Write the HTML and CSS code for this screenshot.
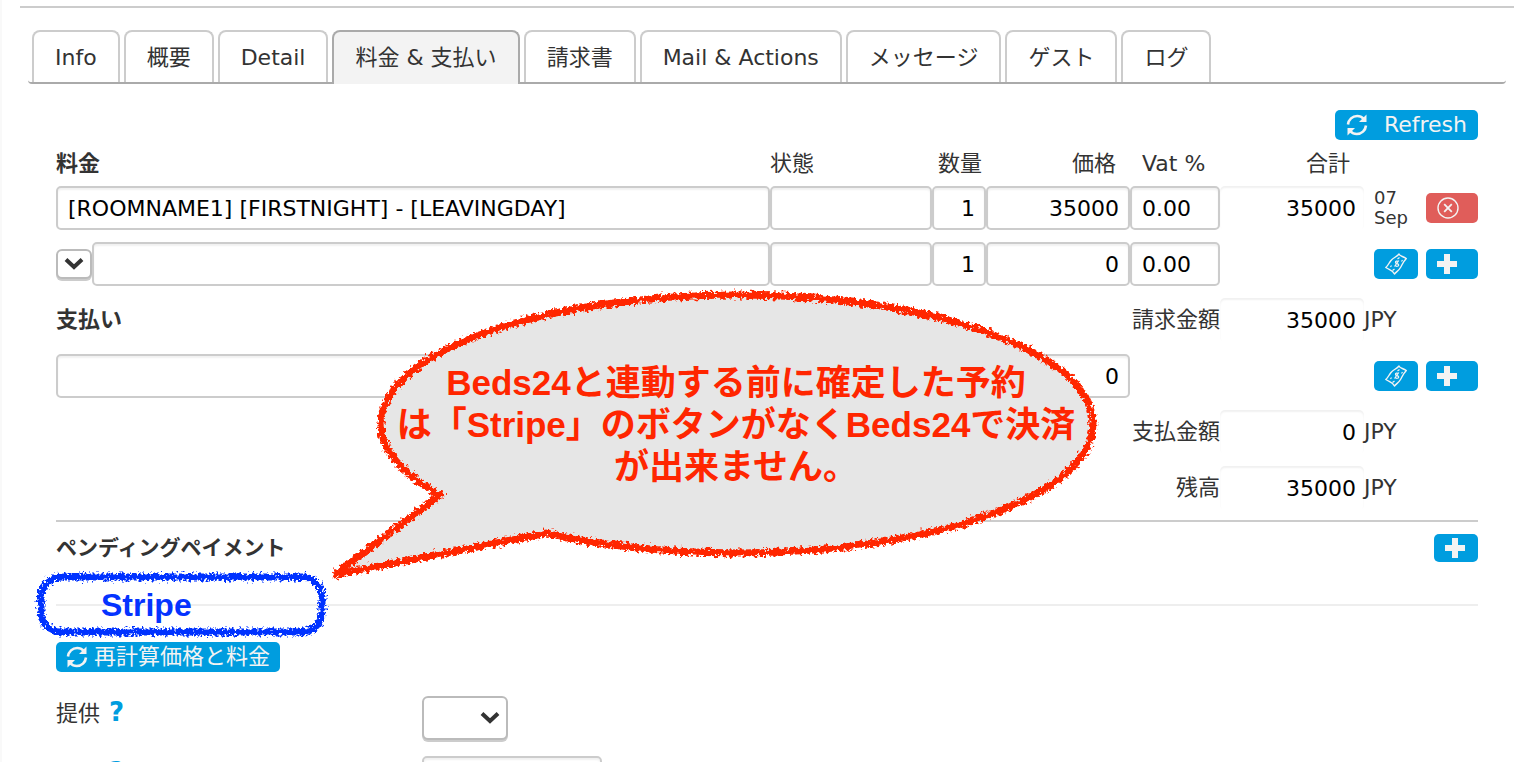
FILE: index.html
```
<!DOCTYPE html>
<html lang="ja">
<head>
    <meta charset="UTF-8">
    <meta name="viewport" content="width=device-width, initial-scale=1.0">
    <title>料金 &amp; 支払い</title>
    <link rel="stylesheet" href="styles.css">
</head>
<body>
    <!-- shared icons -->
    <svg class="icon-defs" width="0" height="0">
        <symbol id="icon-refresh" viewBox="0 0 22 22">
            <path d="M2 10.5C2.5 5.500 6.500 2 11.200 2c2.600 0 4.800 1 6.300 2.600" fill="none" stroke="currentColor" stroke-width="2.600"/>
            <path d="M20.500 0.500v7.500h-7.500z" fill="currentColor"/>
            <path d="M20 11.500C19.500 16.500 15.500 20 10.800 20c-2.600 0-4.800-1-6.300-2.600" fill="none" stroke="currentColor" stroke-width="2.600"/>
            <path d="M1.500 21.500v-7.500h7.500z" fill="currentColor"/>
        </symbol>
        <symbol id="icon-plus" viewBox="0 0 20 20">
            <path d="M7 0h6v7h7v6h-7v7H7v-7H0V7h7z" fill="currentColor"/>
        </symbol>
        <symbol id="icon-money" viewBox="0 0 22 22">
            <path d="M14 1c1 2.500 3.500 2 7.300 4.500C18 9 17.500 11 15.500 14.500c-2 3.500-4 4-6 6.500C7.500 17 5.500 17.500 0.800 14.500 3.500 12 3.500 10.500 6 7.500 8.500 4.500 11.500 4 14 1z" fill="none" stroke="currentColor" stroke-width="1.400" stroke-linejoin="round"/>
            <path d="M13.500 8.800c-1.200-1.300-3.300-.6-3 .7.300 1.400 3.100 1 3.200 2.500.1 1.300-2.400 1.900-3.700.4M13.800 7.500l-4.300 6M17.500 7l-1 1.500M5.500 14l1-1.500M14.500 4.500L12.500 6M7.500 17.500l2-1.500" fill="none" stroke="currentColor" stroke-width="1.200"/>
        </symbol>
        <symbol id="icon-delete" viewBox="0 0 22 22">
            <circle cx="11" cy="11" r="10" fill="none" stroke="currentColor" stroke-width="1.400"/>
            <path d="M7.200 7.200l7.600 7.600M14.800 7.200l-7.600 7.600" fill="none" stroke="currentColor" stroke-width="1.800"/>
        </symbol>
    </svg>

    <div class="page">
        <nav class="tabs">
            <a href="#info">Info</a>
            <a href="#summary">概要</a>
            <a href="#detail">Detail</a>
            <a href="#charges" class="active">料金 &amp; 支払い</a>
            <a href="#invoice">請求書</a>
            <a href="#mail">Mail &amp; Actions</a>
            <a href="#messages">メッセージ</a>
            <a href="#guests">ゲスト</a>
            <a href="#log">ログ</a>
        </nav>

        <main class="content">
            <div class="toolbar">
                <button class="btn btn-refresh"><svg class="icon"><use href="#icon-refresh"/></svg>Refresh</button>
            </div>

            <table class="charges">
                <colgroup>
                    <col>
                    <col class="col-status">
                    <col class="col-qty">
                    <col class="col-price">
                    <col class="col-vat">
                    <col class="col-total">
                    <col class="col-actions">
                </colgroup>
                <thead>
                    <tr>
                        <th class="title">料金</th>
                        <th>状態</th>
                        <th class="num qty-head">数量</th>
                        <th class="num">価格</th>
                        <th class="vat-head">Vat %</th>
                        <th class="num">合計</th>
                        <th></th>
                    </tr>
                </thead>
                <tbody>
                    <tr>
                        <td><input type="text" aria-label="料金" value="[ROOMNAME1] [FIRSTNIGHT] - [LEAVINGDAY]"></td>
                        <td><input type="text" aria-label="状態"></td>
                        <td><input type="text" class="num" aria-label="数量" value="1"></td>
                        <td><input type="text" class="num" aria-label="価格" value="35000"></td>
                        <td><input type="text" aria-label="Vat %" value="0.00"></td>
                        <td><input type="text" class="num total" aria-label="合計" value="35000" readonly></td>
                        <td>
                            <div class="actions">
                                <span class="date">07 Sep</span>
                                <button class="btn btn-wide btn-danger" aria-label="削除"><svg class="icon"><use href="#icon-delete"/></svg></button>
                            </div>
                        </td>
                    </tr>
                    <tr>
                        <td>
                            <div class="new-item">
                                <select class="picker" aria-label="項目"><option></option></select>
                                <input type="text" aria-label="料金">
                            </div>
                        </td>
                        <td><input type="text" aria-label="状態"></td>
                        <td><input type="text" class="num" aria-label="数量" value="1"></td>
                        <td><input type="text" class="num" aria-label="価格" value="0"></td>
                        <td><input type="text" aria-label="Vat %" value="0.00"></td>
                        <td></td>
                        <td>
                            <div class="actions">
                                <button class="btn" aria-label="金額"><svg class="icon"><use href="#icon-money"/></svg></button>
                                <button class="btn btn-wide" aria-label="追加"><svg class="icon icon-plus"><use href="#icon-plus"/></svg></button>
                            </div>
                        </td>
                    </tr>
                    <tr>
                        <th class="title" colspan="3">支払い</th>
                        <td class="sum-label" colspan="2"><label for="charged">請求金額</label></td>
                        <td><input type="text" id="charged" class="num total" value="35000" readonly></td>
                        <td>JPY</td>
                    </tr>
                    <tr>
                        <td colspan="3"><input type="text" aria-label="支払い"></td>
                        <td><input type="text" class="num" aria-label="支払い金額" value="0"></td>
                        <td colspan="2"></td>
                        <td>
                            <div class="actions">
                                <button class="btn" aria-label="金額"><svg class="icon"><use href="#icon-money"/></svg></button>
                                <button class="btn btn-wide" aria-label="追加"><svg class="icon icon-plus"><use href="#icon-plus"/></svg></button>
                            </div>
                        </td>
                    </tr>
                    <tr>
                        <td class="sum-label" colspan="5"><label for="paid">支払金額</label></td>
                        <td><input type="text" id="paid" class="num total" value="0" readonly></td>
                        <td>JPY</td>
                    </tr>
                    <tr>
                        <td class="sum-label" colspan="5"><label for="balance">残高</label></td>
                        <td><input type="text" id="balance" class="num total" value="35000" readonly></td>
                        <td>JPY</td>
                    </tr>
                </tbody>
            </table>

            <section class="pending">
                <h2>ペンディングペイメント</h2>
                <button class="btn btn-small" aria-label="追加"><svg class="icon icon-plus"><use href="#icon-plus"/></svg></button>
            </section>

            <section class="options">
                <button class="btn btn-recalc"><svg class="icon"><use href="#icon-refresh"/></svg>再計算価格と料金</button>
                <div class="field">
                    <label for="offer">提供 <a href="#help-offer" class="help">?</a></label>
                    <select id="offer" class="offer"><option></option></select>
                </div>
                <div class="field">
                    <label for="price">価格 <a href="#help-price" class="help">?</a></label>
                    <input type="text" id="price" class="price">
                </div>
            </section>
        </main>

        <!-- hand drawn notes on top of the form -->
        <div class="note note-bubble">
            <svg width="800" height="310" viewBox="310 280 800 310">
                <filter id="crayon" x="-5%" y="-5%" width="110%" height="110%">
                    <feTurbulence type="fractalNoise" baseFrequency="0.3" numOctaves="3" seed="4" result="noise"/>
                    <feDisplacementMap in="SourceGraphic" in2="noise" scale="9" xChannelSelector="R" yChannelSelector="G"/>
                </filter>
                <path d="M440 495L334 575L547 533A356 129 0 0 0 1093 424A356 129 0 0 0 737 295A356 129 0 0 0 381 424A356 129 0 0 0 440 495Z" fill="#e6e6e6"/>
                <path d="M440 495L334 575L547 533A356 129 0 0 0 1093 424A356 129 0 0 0 737 295A356 129 0 0 0 381 424A356 129 0 0 0 440 495Z" fill="none" stroke="#ff2600" stroke-width="7" filter="url(#crayon)"/>
            </svg>
            <p>Beds24と連動する前に確定した予約<br>は「Stripe」のボタンがなくBeds24で決済<br>が出来ません。</p>
        </div>
        <div class="note note-stripe">
            <svg width="300" height="72" viewBox="0 0 300 72">
                <filter id="chalk" x="-5%" y="-10%" width="110%" height="120%">
                    <feTurbulence type="fractalNoise" baseFrequency="0.4" numOctaves="2" seed="9" result="noise"/>
                    <feDisplacementMap in="SourceGraphic" in2="noise" scale="10" xChannelSelector="R" yChannelSelector="G"/>
                </filter>
                <rect x="9" y="9" width="281" height="55" rx="20" fill="none" stroke="#0433ff" stroke-width="7" filter="url(#chalk)"/>
            </svg>
            <p>Stripe</p>
        </div>
    </div>
</body>
</html>
```
FILE: styles.css
```
* {
    box-sizing: border-box;
}
body {
    font-family: "DejaVu Sans", "Noto Sans CJK JP", sans-serif;
    font-size: 22px;
    line-height: 28px;
    color: #333;
    margin: 0;
    background: #fff;
    border-left: 2px solid #f9f9f9;
}
button, input, select {
    font: inherit;
    margin: 0;
}
.icon-defs {
    position: absolute;
}
.page {
    position: relative;
    margin: 6px 14px 0 18px;
    border-top: 2px solid #ccc;
}

/* tabs */
.tabs {
    display: flex;
    gap: 4px;
    margin: 22px 8px 0;
    padding: 0 4px;
    border-bottom: 2px solid #aaa;
    border-radius: 4px;
}
.tabs a {
    height: 52px;
    padding: 12px 21px;
    border: 2px solid #ccc;
    border-bottom: none;
    border-radius: 8px 8px 0 0;
    color: #333;
    text-decoration: none;
    white-space: nowrap;
}
.tabs a.active {
    height: 54px;
    margin-bottom: -2px;
    background: #f3f3f3;
    border-color: #aaa;
}

.content {
    padding: 26px 36px;
}
.toolbar {
    display: flex;
    justify-content: flex-end;
}

/* buttons */
.btn {
    display: flex;
    align-items: center;
    width: 44px;
    height: 30px;
    padding: 0 11px;
    border: none;
    border-radius: 5px;
    background: #009ddf;
    color: #f3f3f3;
    cursor: pointer;
    white-space: nowrap;
}
.btn-wide {
    width: 52px;
}
.btn-danger {
    background: #e05d5a;
}
.btn-small {
    height: 28px;
}
.btn-refresh {
    width: auto;
    gap: 16px;
}
.btn-recalc {
    width: auto;
    gap: 6px;
    padding: 0 10px;
}
.icon {
    width: 22px;
    height: 22px;
    flex: none;
}
.icon-plus {
    width: 20px;
    height: 20px;
}

/* charges and payments */
.charges {
    width: 100%;
    table-layout: fixed;
    border-collapse: collapse;
    margin-top: 8px;
}
.col-status {
    width: 162px;
}
.col-qty {
    width: 54px;
}
.col-price, .col-total {
    width: 144px;
}
.col-vat {
    width: 90px;
}
.col-actions {
    width: 114px;
}
.charges th, .charges td {
    padding: 0;
    text-align: left;
    font-weight: normal;
}
.charges thead tr {
    height: 32px;
}
.charges tbody tr {
    height: 56px;
}
.charges .title {
    font-weight: bold;
}
.charges th.num {
    text-align: right;
    padding-right: 14px;
}
.charges th.qty-head {
    padding-right: 4px;
}
.charges th.vat-head {
    padding-left: 12px;
}
.charges .sum-label {
    text-align: right;
}
input {
    display: block;
    width: 100%;
    height: 44px;
    padding: 0 10px;
    border: 2px solid #ccc;
    border-radius: 5px;
    background: #fff;
    box-shadow: inset 0 2px 2px rgba(0,0,0,0.06);
    color: #000;
}
input.num {
    text-align: right;
    padding: 0 9px;
}
input.total {
    border: none;
    padding: 0 8px;
}
.new-item {
    display: flex;
    align-items: center;
}
select {
    appearance: none;
    border: 2px solid #bbb;
    border-radius: 6px;
    background-color: #fff;
    background-image: url("data:image/svg+xml,%3Csvg xmlns='http://www.w3.org/2000/svg' width='20' height='14'%3E%3Cpath d='M2 2.500l8 7.500 8-7.500' fill='none' stroke='%23333' stroke-width='4'/%3E%3C/svg%3E");
    background-repeat: no-repeat;
    background-position: right 6px center;
    box-shadow: 0 2px 0 #ccc;
}
.picker {
    width: 36px;
    height: 30px;
    flex: none;
}
.actions {
    display: flex;
    align-items: center;
    justify-content: flex-end;
    gap: 8px;
}
.date {
    width: 44px;
    font-size: 18px;
    line-height: 20px;
}

/* pending payments */
.pending {
    display: flex;
    justify-content: space-between;
    align-items: flex-start;
    height: 86px;
    margin-top: 4px;
    padding-top: 12px;
    border-top: 2px solid #ccc;
    border-bottom: 2px solid #eee;
}
.pending h2 {
    margin: 0;
    font-size: 21px;
    line-height: 28px;
}

.options {
    padding-top: 36px;
}
.field {
    display: grid;
    grid-template-columns: 366px 1fr;
    align-items: start;
    margin-top: 16px;
}
.field label {
    padding-top: 2px;
}
.btn-recalc {
    margin-bottom: 24px;
}
.help {
    margin-left: 2px;
    color: #009ddf;
    font-size: 26px;
    font-weight: bold;
    text-decoration: none;
}
.offer {
    width: 86px;
    height: 44px;
}
.price {
    width: 180px;
}

/* notes */
.note {
    position: absolute;
    font-family: "Liberation Sans", "Noto Sans CJK JP", sans-serif;
    font-weight: bold;
    pointer-events: none;
}
.note svg {
    display: block;
}
.note p {
    position: absolute;
    margin: 0;
    white-space: nowrap;
}
.note-bubble {
    top: 272px;
    left: 290px;
    color: #ff2600;
    font-size: 35px;
    line-height: 42px;
}
.note-bubble p {
    top: 82px;
    left: 26px;
    width: 100%;
    text-align: center;
}
.note-stripe {
    top: 560px;
    left: 12px;
    color: #0433ff;
    font-size: 32px;
    line-height: 36px;
}
.note-stripe p {
    top: 19px;
    left: 69px;
}
```
